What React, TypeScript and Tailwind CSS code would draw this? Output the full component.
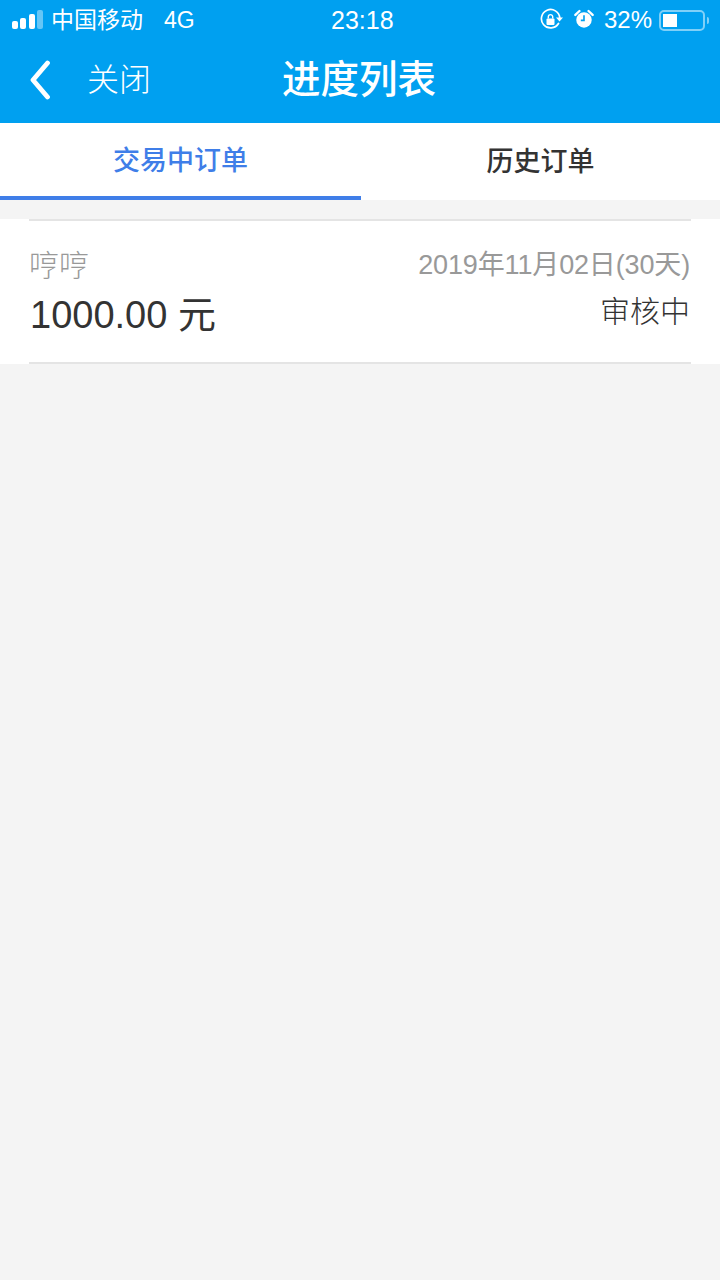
import React from 'react';

const font = "font-['Liberation_Sans','Noto_Sans_CJK_SC',sans-serif]";

const StatusBar = () => (
  <div className="h-[40px] flex items-center justify-between text-white relative">
    <div className="flex items-center pl-[12px]">
      {/* signal */}
      <div className="flex items-end gap-[2.5px] w-[31px] h-[19px] mb-[1px]">
        <span className="w-[6px] h-[8px] rounded-[2px] bg-white" />
        <span className="w-[6px] h-[11px] rounded-[2px] bg-white" />
        <span className="w-[6px] h-[15px] rounded-[2px] bg-white" />
        <span className="w-[6px] h-[19px] rounded-[2px] bg-white/40" />
      </div>
      <span className="ml-[8px] text-[23px] leading-none">中国移动</span>
      <span className="ml-[21px] text-[23px] leading-none">4G</span>
    </div>
    <span className="absolute left-[331px] top-[7px] text-[25px] leading-[26px] font-medium">23:18</span>
    <div className="flex items-center pr-[11px]">
      <svg width="24" height="24" viewBox="0 0 24 24" fill="none" className="mr-[10px]">
        <path d="M19.5 15.500A9.200 9.200 0 1 1 20.800 10" stroke="white" strokeWidth="1.700" strokeLinecap="round" />
        <path d="M17 9.500h7l-3.500 4z" fill="white" />
        <rect x="7.500" y="10.500" width="8" height="6.500" rx="1" fill="white" />
        <path d="M9.300 10.500V8.800a2.200 2.200 0 0 1 4.400 0v1.700" stroke="white" strokeWidth="1.400" />
      </svg>
      <svg width="20" height="20" viewBox="0 0 22 22" fill="none" className="ml-[1px] mr-[10px] mb-[2px]">
        <circle cx="11" cy="12" r="8.500" fill="white" />
        <path d="M11 7v5.500H7.500" stroke="#00a0f0" strokeWidth="1.800" />
        <path d="M1.500 6.500 6 2.200M20.500 6.500 16 2.200" stroke="white" strokeWidth="2.600" strokeLinecap="round" />
      </svg>
      <span className="text-[24px] leading-none font-light">32%</span>
      <div className="ml-[7px] w-[46px] h-[21px] rounded-[5px] border-2 border-white/50 p-[2px]">
        <div className="w-[14px] h-full bg-white" />
      </div>
      <span className="ml-[2px] w-[2px] h-[7px] bg-white/50 rounded-r-[2px]" />
    </div>
  </div>
);

export default function App() {
  return (
    <div className={`${font} w-[720px] h-[1280px] bg-[#f4f4f4] overflow-hidden`}>
      <header className="h-[123px] bg-[#00a0f0]">
        <StatusBar />
        <div className="h-[83px] relative flex items-center justify-center text-white">
          <div className="absolute left-[29px] top-[20px] flex items-center">
            <svg width="22" height="40" viewBox="0 0 22 40" fill="none">
              <path d="M18.500 3 4 20l14.500 17" stroke="white" strokeWidth="4.800" strokeLinecap="round" strokeLinejoin="round" />
            </svg>
            <span className="ml-[36px] text-[32px] leading-[40px] font-light">关闭</span>
          </div>
          <h1 className="text-[38.500px] leading-[44px] font-medium mb-[3px] ml-[-2px]">进度列表</h1>
        </div>
      </header>

      <nav className="h-[77px] bg-white flex">
        <div className="w-[361px] h-full border-b-4 border-[#3f7ee8] flex items-center justify-center text-[#3f7ee8] text-[27px] font-medium pt-[4px]">
          交易中订单
        </div>
        <div className="flex-1 flex items-center justify-center text-[#333333] text-[27px] font-medium pt-[2px]">
          历史订单
        </div>
      </nav>

      <section className="mt-[19px] bg-white h-[145px] px-[29px]">
        <div className="h-full border-y-2 border-[#e4e4e4] flex justify-between items-start">
          <div className="flex flex-col">
            <span className="mt-[27px] text-[30px] leading-[36px] text-[#999999] font-light">哼哼</span>
            <span className="mt-[9px] text-[38px] leading-[44px] text-[#333333] pl-[1px]">1000.00 元</span>
          </div>
          <div className="flex flex-col items-end pr-[1px]">
            <span className="mt-[26px] text-[27px] leading-[36px] text-[#999999] tracking-[-0.15px]">2019年11月02日(30天)</span>
            <span className="mt-[9px] text-[30px] leading-[40px] text-[#333333] font-light">审核中</span>
          </div>
        </div>
      </section>
    </div>
  );
}
